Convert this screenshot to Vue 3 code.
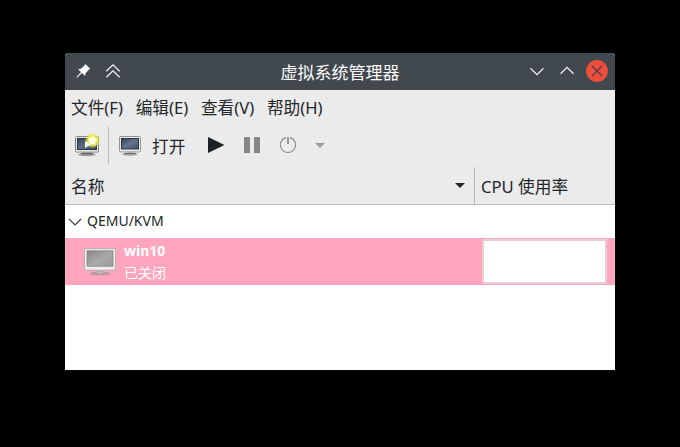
<script setup>
const menus = ['文件(F)', '编辑(E)', '查看(V)', '帮助(H)']
</script>

<template>
  <div class="desktop">
    <main class="window">
      <header class="titlebar">
        <div class="left-controls">
          <svg width="16" height="16" viewBox="0 0 16 16"><path d="M10.4 1 L15.2 5.8 L13.8 6.8 L10.6 10.2 L10.2 13 L7 10 L2 14.8 L1.4 14.2 L6 9 L3 6.2 L6 5.8 L9.4 2.4 Z" fill="#fcfcfc" /></svg>
          <svg width="16" height="16" viewBox="0 0 16 16"><path d="M1.3 8.2 L8 1.8 L14.7 8.2 M1.3 14.2 L8 7.8 L14.7 14.2" fill="none" stroke="#f1f3f4" stroke-width="1.2" /></svg>
        </div>
        <h1>虚拟系统管理器</h1>
        <div class="right-controls">
          <svg width="16" height="16" viewBox="0 0 16 16"><path d="M1.5 5.2 L8 11.6 L14.5 5.2" fill="none" stroke="#f1f3f4" stroke-width="1.2" /></svg>
          <svg width="16" height="16" viewBox="0 0 16 16"><path d="M1.5 10.8 L8 4.4 L14.5 10.8" fill="none" stroke="#f1f3f4" stroke-width="1.2" /></svg>
          <svg width="22" height="22" viewBox="0 0 22 22"><circle cx="11" cy="11" r="10.9" fill="#ed4e3d" /><path d="M6 6 L16 16 M16 6 L6 16" stroke="#4a4145" stroke-width="1.2" /></svg>
        </div>
      </header>

      <nav class="menu">
        <span v-for="m in menus" :key="m">{{ m }}</span>
      </nav>

      <div class="toolbar">
        <div class="new-cell">
          <svg width="26" height="24" viewBox="0 0 26 24">
            <defs>
              <linearGradient id="screenA" x1="0" y1="0" x2="1" y2="1"><stop offset="0" stop-color="#34435b" /><stop offset=".5" stop-color="#5d6c84" /><stop offset="1" stop-color="#3e4b61" /></linearGradient>
              <radialGradient id="glow"><stop offset="0" stop-color="#fffef0" /><stop offset=".45" stop-color="#fbf774" /><stop offset=".75" stop-color="#e9e33c" stop-opacity=".8" /><stop offset="1" stop-color="#e9e33c" stop-opacity="0" /></radialGradient>
            </defs>
            <ellipse cx="13" cy="21.6" rx="9" ry="1.6" fill="#9b9c98" />
            <path d="M9 18 H17 V20.5 H9 Z" fill="#b8b9b4" />
            <path d="M7 20.6 H19" stroke="#60625e" stroke-width="1.4" />
            <rect x="1.5" y="3.5" width="23" height="15.6" rx="1.2" fill="#e9e9e4" stroke="#858681" />
            <rect x="3.5" y="5.5" width="19" height="11" fill="url(#screenA)" stroke="#28344a" />
            <circle cx="18.5" cy="7.5" r="7.6" fill="url(#glow)" />
            <path d="M11 8 L17 11.5 L11 15 Z" fill="#f7f8f2" />
            <path d="M18.6 2.5 L20.2 5.6 L23.6 6.1 L21 8.5 L21.6 12 L18.6 10.4 L15.4 12 L16 8.5 L13.7 6.1 L17 5.6 Z" fill="#fffde8" />
          </svg>
        </div>
        <svg class="open-icon" width="24" height="24" viewBox="0 0 24 24">
          <defs><linearGradient id="screenB" x1="0" y1="0" x2="1" y2="1"><stop offset="0" stop-color="#35445c" /><stop offset=".5" stop-color="#65748b" /><stop offset="1" stop-color="#3e4b61" /></linearGradient></defs>
          <ellipse cx="12" cy="21.6" rx="8" ry="1.4" fill="#b1b2af" />
          <path d="M9 18 H15 V20.5 H9 Z" fill="#b8b9b4" />
          <path d="M6 20.7 H18" stroke="#70716e" stroke-width="1.3" />
          <rect x="1.5" y="3.5" width="21" height="15.4" rx="1.2" fill="#eeeeea" stroke="#91928e" />
          <rect x="3.5" y="5.5" width="17" height="10.5" fill="url(#screenB)" stroke="#28344a" />
        </svg>
        <span class="open-label">打开</span>
        <svg class="play" width="17" height="16" viewBox="0 0 17 16"><path d="M0 0 L16.5 8 L0 16 Z" fill="#1e2124" /></svg>
        <svg class="pause" width="16" height="16" viewBox="0 0 16 16"><path d="M0 0 H6 V16 H0 Z M10 0 H16 V16 H10 Z" fill="#858687" /></svg>
        <svg class="power" width="18" height="18" viewBox="0 0 18 18"><path d="M7 1.6 A7.6 7.6 0 1 0 11 1.6" fill="none" stroke="#8a8b8c" stroke-width="1.1" /><path d="M9 1 V8" stroke="#858687" stroke-width="1.7" /></svg>
        <svg class="drop" width="10" height="5" viewBox="0 0 10 5"><path d="M0 0 H10 L5 5 Z" fill="#9b9c9d" /></svg>
      </div>

      <div class="columns">
        <div class="name-col">
          <span>名称</span>
          <svg width="10" height="5" viewBox="0 0 10 5"><path d="M0 0 H10 L5 5 Z" fill="#232629" /></svg>
        </div>
        <div class="cpu-col">CPU 使用率</div>
      </div>

      <section class="group">
        <svg width="14" height="8" viewBox="0 0 14 8"><path d="M1 1 L7 7 L13 1" fill="none" stroke="#34383c" stroke-width="1.1" /></svg>
        <span>QEMU/KVM</span>
      </section>
      <section class="vm">
        <svg width="34" height="30" viewBox="0 0 34 30">
          <defs>
            <linearGradient id="screenC" x1="0" y1="0" x2="1" y2="1"><stop offset="0" stop-color="#878787" /><stop offset=".55" stop-color="#aaa" /><stop offset="1" stop-color="#999" /></linearGradient>
          </defs>
          <ellipse cx="17" cy="26.7" rx="11" ry="1.8" fill="#b28a94" opacity=".6" />
          <path d="M13 22 H21 V25.5 H13 Z" fill="#bcbcbc" />
          <path d="M9 26 Q17 23.4 25 26 Z" fill="#ededed" stroke="#999" stroke-width=".7" />
          <rect x="1.5" y="1.5" width="31" height="21.7" rx="1.4" fill="#eee" stroke="#b9aeac" />
          <rect x="4" y="3.8" width="26" height="15.4" fill="url(#screenC)" stroke="#858585" stroke-width=".8" />
        </svg>
        <div class="vm-text">
          <b>win10</b>
          <span>已关闭</span>
        </div>
        <div class="graph"></div>
      </section>
    </main>
  </div>
</template>

<style>
body { margin: 0; background: #000; }
</style>

<style scoped>
* { box-sizing: border-box; }
svg { display: block; flex: none; }
.desktop {
  width: 680px;
  height: 447px;
  padding: 53px 65px 77px;
  background: #000;
  font-family: "Noto Sans", "Noto Sans CJK SC", sans-serif;
  font-size: 16.67px;
  line-height: 24px;
  color: #232629;
  white-space: nowrap;
}
.window {
  height: 317px;
  background: #fff;
  border-radius: 4px 4px 0 0;
  overflow: hidden;
}
.titlebar {
  height: 37px;
  padding: 0 7px 1px 10px;
  background: #41484e;
  display: grid;
  grid-template-columns: 1fr auto 1fr;
  align-items: center;
}
h1 {
  margin: 0;
  padding: 3px 3px 0 0;
  font-size: 17px;
  font-weight: 400;
  line-height: 24px;
  color: #fcfcfc;
}
.left-controls, .right-controls { display: flex; align-items: center; gap: 14px; }
.right-controls { justify-content: flex-end; }
.right-controls svg:last-child { margin-left: -3px; }
.menu {
  height: 36px;
  padding: 0 6px;
  display: flex;
  align-items: center;
  gap: 12.7px;
  background: #ebebeb;
}
.toolbar {
  height: 41px;
  background: #ebebeb;
  display: flex;
  align-items: center;
  padding-bottom: 3px;
}
.new-cell {
  width: 44px;
  height: 37px;
  padding: 6px 0 0 9px;
  border-right: 1px solid #b8b9ba;
}
.open-icon { margin-left: 9px; }
.open-label { margin: 3px 0 0 10px; }
.play { margin-left: 23px; }
.pause { margin-left: 19px; }
.power { margin-left: 19px; }
.drop { margin-left: 18px; }
.columns {
  height: 38px;
  display: flex;
  background: #ebebeb;
  border-bottom: 1px solid #b9babb;
}
.name-col {
  width: 410px;
  padding: 0 9px 0 6px;
  display: flex;
  align-items: center;
  justify-content: space-between;
  border-right: 1px solid #b9babb;
}
.name-col span { padding-top: 2px; }
.cpu-col { padding: 8px 0 0 6px; }
.group {
  height: 33px;
  display: flex;
  align-items: center;
  gap: 5px;
  padding-left: 3px;
  font-size: 14px;
}
.group span { padding-bottom: 2px; }
.vm {
  height: 47px;
  display: flex;
  align-items: center;
  padding: 0 8px 0 18px;
  background: #ffa5bd;
  color: #fff;
  font-size: 14px;
  line-height: 22px;
}
.vm-text { display: flex; flex-direction: column; margin-left: 7px; }
.graph {
  width: 125px;
  height: 45px;
  margin-left: auto;
  background: #fff;
  border: 2px solid #e6cdd2;
}
</style>
